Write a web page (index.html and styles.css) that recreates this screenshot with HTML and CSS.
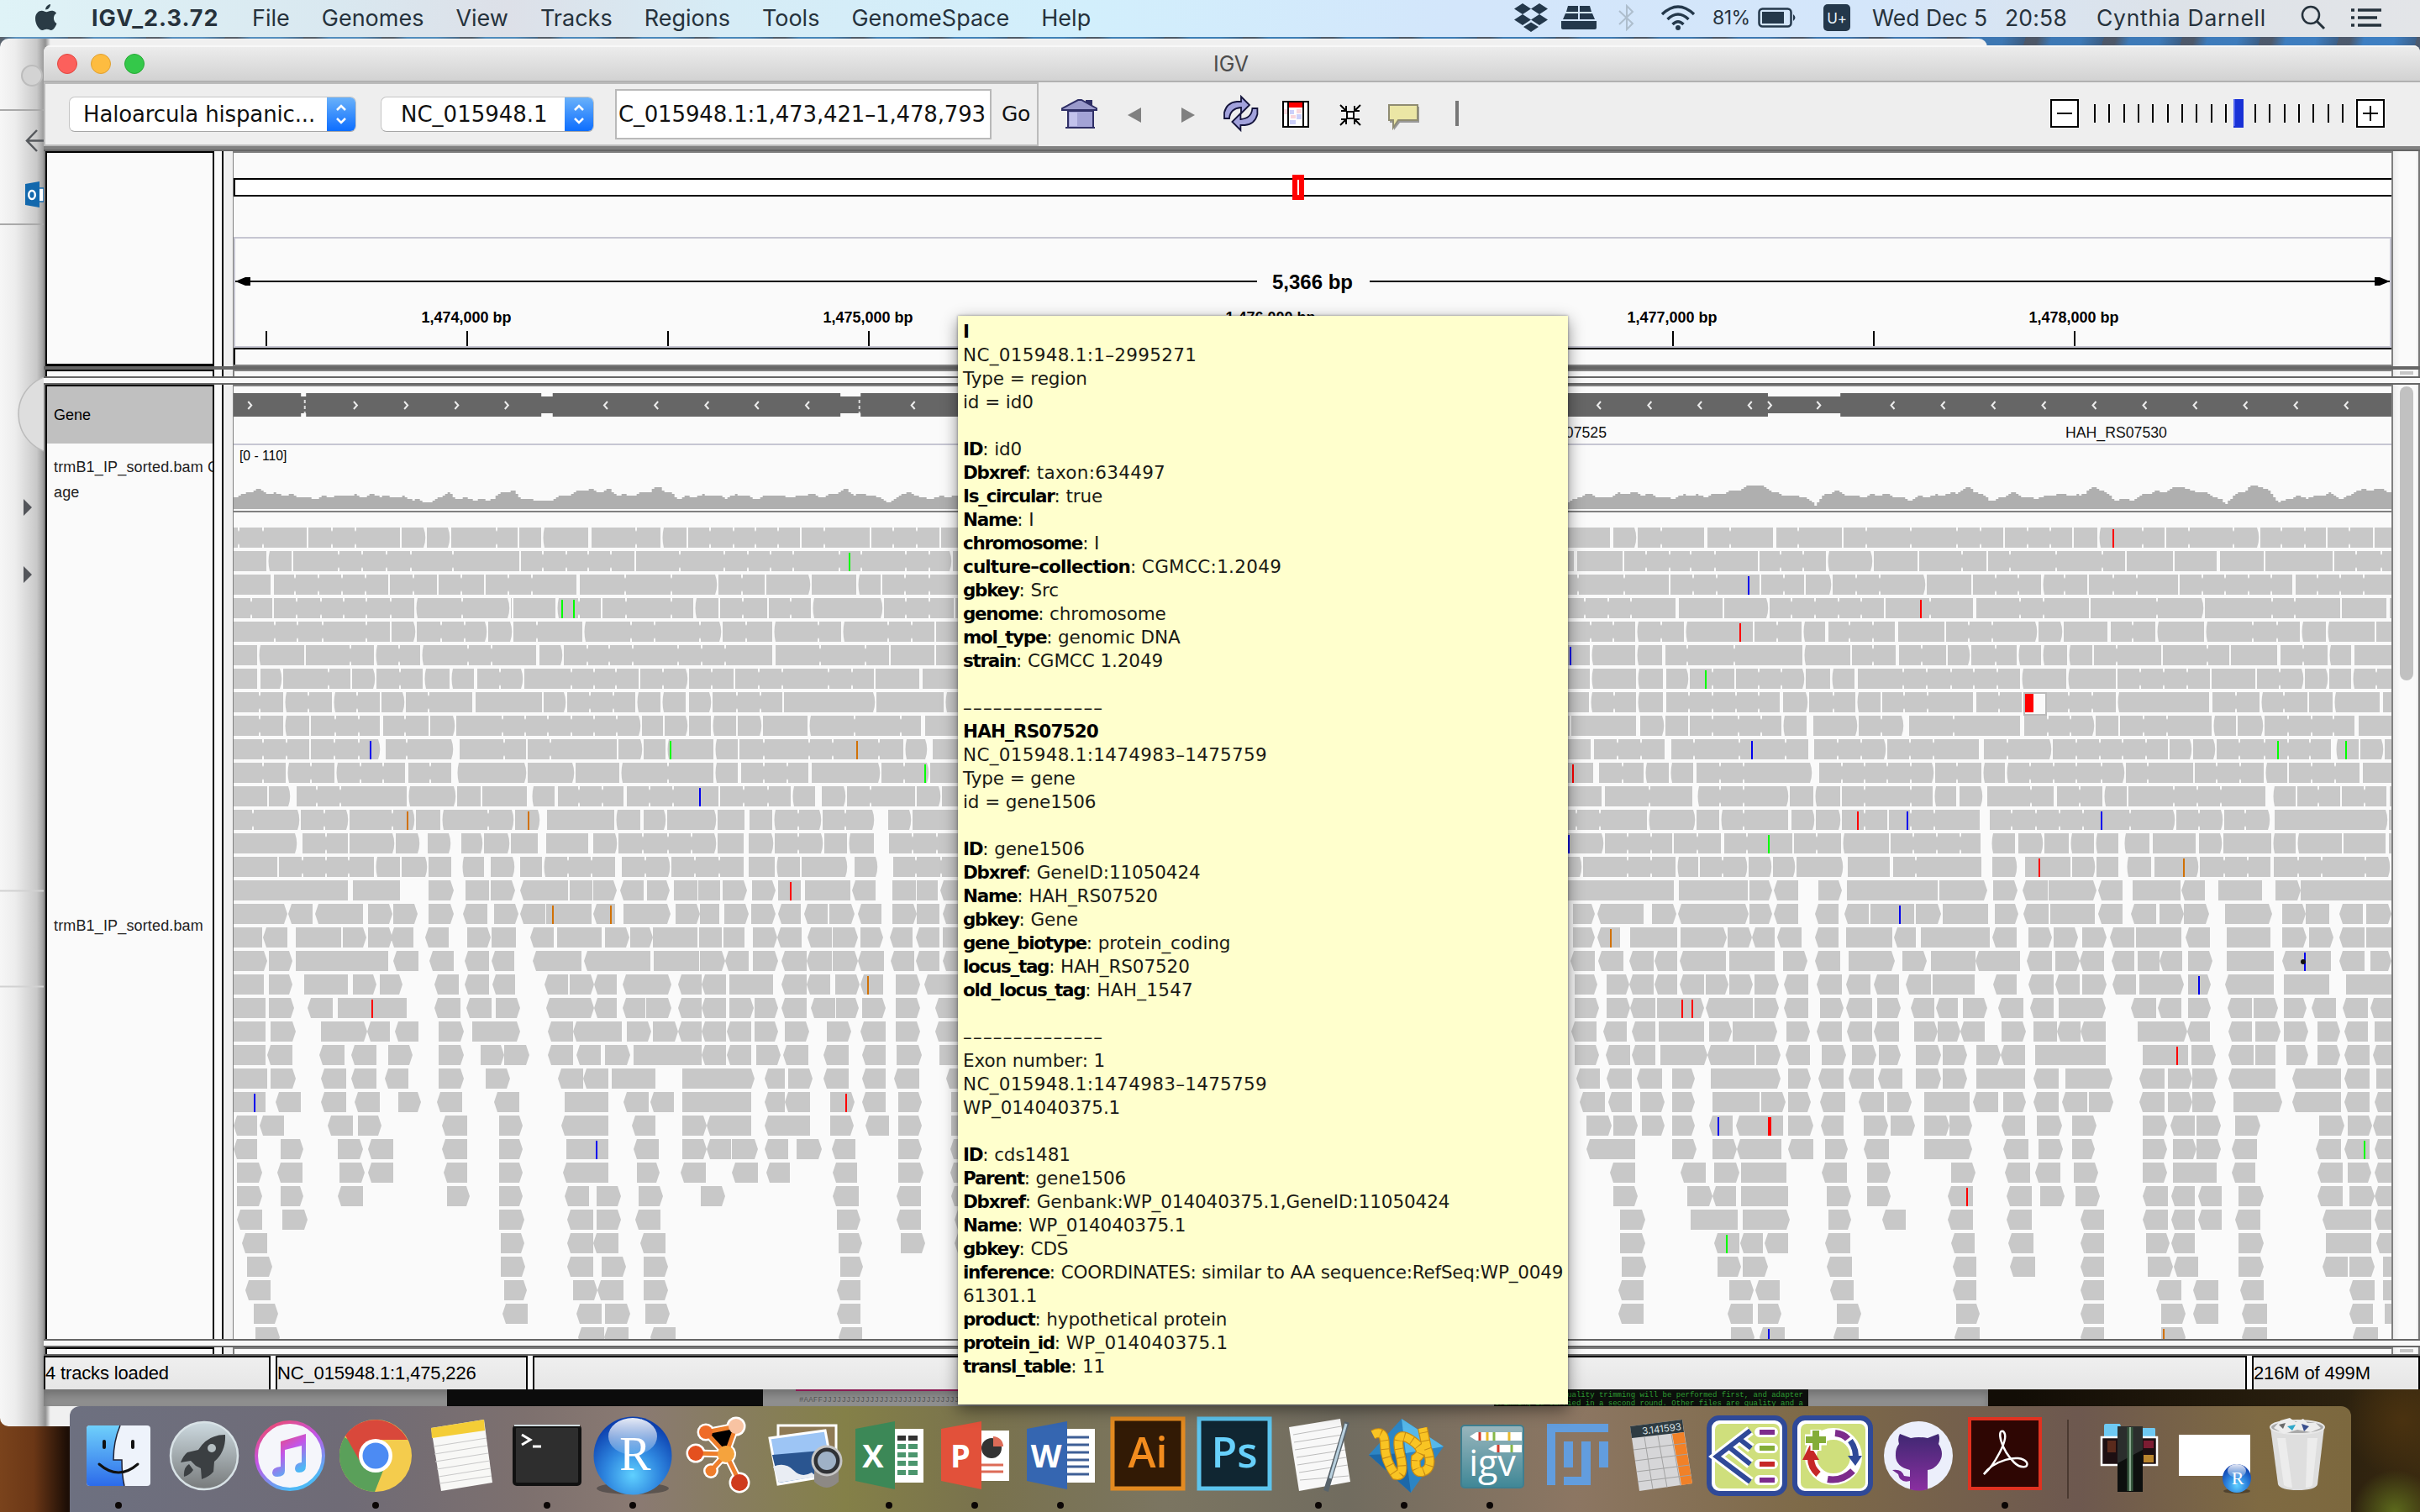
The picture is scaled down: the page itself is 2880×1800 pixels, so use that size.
FILE: index.html
```html
<!DOCTYPE html>
<html lang="en">
<head>
<meta charset="utf-8">
<title>IGV</title>
<link rel="stylesheet" href="styles.css">
</head>
<body>
<div class="desktop">

  <div class="back-window">
    <svg width="52" height="1652" viewBox="0 46 52 1652">
      <circle cx="38" cy="90" r="12" fill="#d3d3d3" stroke="#bcbcbc" stroke-width="2"/>
      <path d="M0 131H52M0 267H52" stroke="#a9a9a9" stroke-width="2"/>
      <path d="M0 1060.500H52M0 1174.500H52" stroke="#d2d2d2" stroke-width="2"/>
      <path d="M44 155L32 167.500L44 180M33 167.500H52" stroke="#55585c" stroke-width="2.500" fill="none"/>
      <path d="M30 219L47 216V247L30 244Z" fill="#1268ad"/>
      <path d="M47 224H52V240H47" fill="#fff" stroke="#1268ad" stroke-width="1.500"/>
      <ellipse cx="38" cy="232" rx="3.800" ry="5" fill="none" stroke="#fff" stroke-width="2.500"/>
      <circle cx="69" cy="493" r="47" fill="#dedede" stroke="#bbb" stroke-width="1.500"/>
      <path d="M28 594L38 604L28 614ZM28 674L38 684L28 694Z" fill="#53555a"/>
    </svg>
  </div>

  <div class="peek">
    <span class="p-gray"></span><span class="p-black"></span><span class="p-gray2"></span>
    <span class="p-pink">#AAFFJJJJJJJJJJJJJJJJJJJJJJJJJJJJJJJJ</span>
    <span class="p-term">uality trimming will be performed first, and adapter<br>trimming is carried in a second round. Other files are quality and a</span>
    <span class="p-gray3"></span>
  </div>

  <header class="menubar">
    <svg class="apple" width="28" height="32" viewBox="0 0 28 32"><path d="M19 0c.3 3-2.400 6.600-5.800 6.500C12.900 3.500 15.800.3 19 0zM26.500 23c-1.500 4-4 8-6.600 8-2 0-2.700-1.200-5.200-1.200S11.400 31 9.500 31C5.500 31 1 23.500 1 17.200 1 11 5 7.800 8.700 7.800c2.300 0 4 1.400 5.600 1.400 1.500 0 3.500-1.500 6.300-1.500 1 0 3.800.3 5.500 3-4.600 2.700-3.900 9.800.4 12.300z" fill="#2a3b45"/></svg>
    <nav class="menus">
      <b>IGV_2.3.72</b><span>File</span><span>Genomes</span><span>View</span><span>Tracks</span><span>Regions</span><span>Tools</span><span>GenomeSpace</span><span>Help</span>
    </nav>
    <div class="status-items">
      <svg width="40" height="34" viewBox="0 0 40 34"><path d="M10 0l10 6.500-10 6.500L0 6.500zM30 0l10 6.500L30 13 20 6.500zM10 13l10 6.500-10 6.500L0 19.500zM30 13l10 6.500L30 26l-10-6.500zM20 22.500l9 5.500-9 6-9-6z" fill="#24384b"/></svg>
      <svg class="s2" width="42" height="28" viewBox="0 0 42 28"><path d="M8 0h12v7H6zM22 0h12l2 7H22zM5 9h15v7H2zM22 9h15l3 7H22zM0 18h42v8q0 2-2 2H2q-2 0-2-2z" fill="#24384b"/></svg>
      <svg class="s3" width="20" height="32" viewBox="0 0 20 32"><path d="M1 8L17 23L10 30V2L17 9L1 24" fill="none" stroke="#aebecd" stroke-width="2"/></svg>
      <svg class="s4" width="42" height="30" viewBox="0 0 42 30"><g fill="none" stroke="#24384b" stroke-width="3.400"><path d="M2 11Q21-7 40 11"/><path d="M8.500 17Q21 5 33.500 17"/><path d="M14.500 23Q21 16.500 27.500 23"/></g><circle cx="21" cy="27" r="3" fill="#24384b"/></svg>
      <span class="pct">81%</span>
      <svg class="s5" width="48" height="24" viewBox="0 0 48 24"><rect x="1.500" y="1.500" width="38" height="21" rx="4" fill="none" stroke="#24384b" stroke-width="2.500"/><rect x="5" y="5" width="26" height="14" fill="#24384b"/><path d="M42 8q5 4 0 8z" fill="#24384b"/></svg>
      <span class="uplus">U+</span>
      <span class="date">Wed Dec 5</span><span class="time">20:58</span><span class="user">Cynthia Darnell</span>
      <svg class="s6" width="30" height="30" viewBox="0 0 30 30"><circle cx="12" cy="12" r="10" fill="none" stroke="#26323c" stroke-width="2.500"/><path d="M19 19L28 28" stroke="#26323c" stroke-width="3"/></svg>
      <svg class="s7" width="36" height="22" viewBox="0 0 36 22"><path d="M0 2H4M8 2H36M0 11H4M8 11H31M0 20H4M8 20H36" stroke="#26323c" stroke-width="3.500"/></svg>
    </div>
  </header>

  <main class="window">
    <div class="titlebar"><i class="dot red"></i><i class="dot amber"></i><i class="dot green"></i><span class="title">IGV</span></div>

    <div class="toolbar">
      <div class="locate">
        <div class="combo genome"><span>Haloarcula hispanic...</span><em><svg width="16" height="28" viewBox="0 0 16 28"><path d="M3 9L8 4L13 9M3 19L8 24L13 19" fill="none" stroke="#fff" stroke-width="2.500"/></svg></em></div>
        <div class="combo chrom"><span>NC_015948.1</span><em><svg width="16" height="28" viewBox="0 0 16 28"><path d="M3 9L8 4L13 9M3 19L8 24L13 19" fill="none" stroke="#fff" stroke-width="2.500"/></svg></em></div>
        <div class="locus"><span>NC_015948.1:1,473,421–1,478,793</span></div>
        <span class="go">Go</span>
      </div>
      <svg class="tools" width="1644" height="74" viewBox="1236 100 1644 74">
        <path d="M1292 126V119H1300V129Z" fill="#2f2f66"/>
        <path d="M1271 132V152H1301V132Z" fill="#a3a3d6" stroke="#2f2f66" stroke-width="2"/>
        <path d="M1264 131V129L1283 119H1287L1305 129V131Z" fill="#9a9acb" stroke="#2f2f66" stroke-width="2"/>
        <path d="M1268 152H1303" stroke="#2f2f66" stroke-width="2"/><path d="M1273 134H1282V150H1273Z" fill="#c2c2ec"/>
        <path d="M1358 128V146L1342 137Z" fill="#808080"/><path d="M1406 128V146L1422 137Z" fill="#808080"/>
        <g fill="#a2a2dc" stroke="#14143c" stroke-width="1.800"><path id="spin" d="M1457 141V134Q1460 122 1472 121H1477V115L1487 125L1477 135V128Q1464 129 1463 141Z"/><use href="#spin" transform="rotate(180 1476.700 135)"/></g>
        <rect x="1527" y="121" width="30" height="30" fill="#fff" stroke="#000" stroke-width="2"/><path d="M1534 122H1550V128H1534Z" fill="#f00"/><path d="M1533 122V150M1551 122V150" stroke="#000" stroke-width="2"/><path d="M1535 131h5v5h-5zM1543 136h6v6h-6zM1535 143h7v5h-7z" fill="#ccd0fa"/><path d="M1543 130h6v5h-6zM1536 137h6v4h-6zM1528 130h4v6h-4z" fill="#f9d6dc"/>
        <path d="M1595 125L1602 132M1602 126V132H1596M1619 125L1612 132M1612 126V132H1618M1595 149L1602 142M1596 142H1602V148M1619 149L1612 142M1618 142H1612V148" fill="none" stroke="#000" stroke-width="2"/><rect x="1603" y="133" width="8" height="8" fill="#fff" stroke="#000" stroke-width="2"/>
        <path d="M1654 127H1689V146H1666L1659 155V146H1654Z" fill="#999"/><path d="M1653 125H1687V143H1664L1658 152V143H1653Z" fill="#ebe6a5" stroke="#8f8c72" stroke-width="2"/>
        <path d="M1734 120V150" stroke="#777" stroke-width="4"/>
        <g fill="#fff" stroke="#000" stroke-width="2"><rect x="2441" y="119" width="32" height="32"/><rect x="2805" y="119" width="32" height="32"/></g>
        <path d="M2448 135H2466M2812 135H2830M2821 126V144" stroke="#000" stroke-width="2"/>
        <g id="zoom-ticks" stroke="#000" stroke-width="2"></g>
        <rect x="2658" y="118" width="12" height="34" fill="#1931d6"/><path d="M2659 118V150" stroke="#4f63f0" stroke-width="2"/>
      </svg>
    </div>
    <div class="rule-dark"></div>

    <section class="pane header">
      <div class="names"></div><div class="split"></div>
      <svg class="data" width="2569" height="256" viewBox="277 180 2569 256">
        <rect x="277" y="180" width="2569" height="256" fill="#fafafa"/>
        <path d="M277 181H2846M277 435H2846" stroke="#808080" stroke-width="2"/>
        <rect x="279" y="213" width="2567" height="20" fill="#fff"/>
        <path d="M278 213H2846M278 233H2846M279 212V234" stroke="#000" stroke-width="2"/>
        <path d="M1538 208H1552V238H1538Z" fill="#f00"/><path d="M1545 214V232" stroke="#fff" stroke-width="2"/>
        <path d="M278 283H2846M278 413H2846M279 283V413M2845 283V413" stroke="#c6c6d2" stroke-width="2"/>
        <path d="M277.500 180V436" stroke="#808080"/>
        <path d="M278 415H2846M279 415V434" stroke="#000" stroke-width="2"/>
        <path d="M280 335H1496M1630 335H2844" stroke="#000" stroke-width="2"/>
        <path d="M280 335L292 330H298V340H292Z"/><path d="M2844 335L2832 330H2826V340H2832Z"/>
        <text x="1562" y="344" class="span-label">5,366 bp</text>
        <g id="ruler"></g>
      </svg>
      <div class="edge"></div><div class="scroll"></div><div class="margin"></div>
    </section>
    <div class="rule-dark thin"></div>
    <section class="pane sliver">
      <div class="names"></div><div class="split"></div><div class="data sliver-data"></div><div class="edge"></div><div class="scroll"><i class="stub"></i></div><div class="margin"></div>
    </section>
    <div class="splitter"></div>

    <section class="pane tracks">
      <div class="names"><div class="gene-name">Gene</div><div class="cov-name">trmB1_IP_sorted.bam Cover<br>age</div><div class="bam-name">trmB1_IP_sorted.bam</div></div>
      <div class="split"></div>
      <svg class="data" width="2569" height="1136" viewBox="277 458 2569 1136">
        <rect x="277" y="458" width="2569" height="1136" fill="#fafafa"/>
        <path d="M277 459H2846M277 609H2846" stroke="#808080" stroke-width="2"/>
        <path d="M277 529H2846" stroke="#c6c6d2" stroke-width="2"/>
        <g id="gene"></g>
        <text x="285" y="548" class="range">[0 - 110]</text>
        <text x="1912" y="521" text-anchor="end" class="feature">HAH_RS07525</text>
        <text x="2458" y="521" class="feature">HAH_RS07530</text>
        <path id="coverage" fill="#afafaf"/>
        <g id="reads"></g>
        <path d="M277.500 458V1594" stroke="#808080"/>
      </svg>
      <div class="edge"></div><div class="scroll"><i class="thumb"></i></div><div class="margin"></div>
    </section>
    <div class="splitter low"></div>
    <section class="pane sliver last">
      <div class="names"></div><div class="split"></div><div class="data sliver-data"></div><div class="edge"></div><div class="scroll"><i class="stub"></i></div><div class="margin"></div>
    </section>
    <div class="rule-status"></div>
    <footer class="statusbar"><span>4 tracks loaded</span><span>NC_015948.1:1,475,226</span><span></span><span>216M of 499M</span></footer>
  </main>

  <div class="dock">
    <svg viewBox="0 0 102 126"><defs><linearGradient id="fb" x1="0" y1="0" x2="0" y2="1"><stop offset="0" stop-color="#6fd0fb"/><stop offset="1" stop-color="#2c6bea"/></linearGradient></defs><rect x="13" y="23" width="76" height="72" rx="4" fill="#eef3fb"/><path d="M53 23H17q-4 0-4 4V91q0 4 4 4H58Q55 82 55 64H45Q45 42 53 23Z" fill="url(#fb)"/><path d="M53 23Q45 42 45 64H55Q55 82 58 95" fill="none" stroke="#223" stroke-width="1.500"/><path d="M34 42V49M68 42V49" stroke="#111" stroke-width="4" stroke-linecap="round"/><path d="M28 69Q51 89 74 69" fill="none" stroke="#111" stroke-width="3" stroke-linecap="round"/><circle class="run" cx="51" cy="118" r="4"/></svg>
    <svg viewBox="0 0 102 126"><defs><linearGradient id="lp" x1="0" y1="0" x2="0" y2="1"><stop offset="0" stop-color="#cddae0"/><stop offset="1" stop-color="#777a7b"/></linearGradient></defs><circle cx="51" cy="59" r="40" fill="url(#lp)" stroke="#d8e2e6" stroke-width="2.500"/><path d="M76 34Q55 34 44 52L31 55Q26 59 23 67L35 65L41 71L47 74L48 87Q57 84 62 78L63 66Q77 54 76 34ZM33 69Q26 73 27 84Q34 82 38 76Z" fill="#3b3f42"/><circle cx="60" cy="50" r="5" fill="#b5bfc2"/></svg>
    <svg viewBox="0 0 102 126"><defs><linearGradient id="it" x1="0" y1="0" x2=".5" y2="1"><stop offset="0" stop-color="#f4495c"/><stop offset=".5" stop-color="#c355e8"/><stop offset="1" stop-color="#4db8f5"/></linearGradient></defs><circle cx="51" cy="59" r="40" fill="#f5f6fb" stroke="url(#it)" stroke-width="4"/><path d="M40 42L70 33V71Q70 79 62 79Q57 79 57 74Q57 68 65 67V47L45 52V77Q45 84 36 84Q30 84 30 79Q30 73 40 72Z" fill="url(#it)"/></svg>
    <svg viewBox="0 0 102 126"><circle cx="51" cy="59" r="43" fill="#f4cc4d"/><path d="M14 37A43 43 0 0 0 50 102L63 69L51 59Z" fill="#5aa05a"/><path d="M15 35A43 43 0 0 1 89 40H51L33 67Z" fill="#d9483b"/><circle cx="51" cy="59" r="20" fill="#fff"/><circle cx="51" cy="59" r="15.500" fill="#4c8bf3"/><circle class="run" cx="51" cy="118" r="4"/></svg>
    <svg viewBox="0 0 102 126"><path d="M15 26L78 16L88 91L27 101Z" fill="#f8f8f6"/><path d="M15 26L78 16L79 29L16 38Z" fill="#f4cd36"/><path d="M18 48L81 38M19 57L82 47M20 66L83 56M22 75L85 65M24 84L86 74M25 92L87 83" stroke="#c9c9c9" stroke-width="1.200"/></svg>
    <svg viewBox="0 0 102 126"><rect x="12" y="24" width="78" height="69" rx="3" fill="#2e2e2e" stroke="#111" stroke-width="4"/><path d="M12 23H90" stroke="#cfdadd" stroke-width="2"/><path d="M21 34L31 40L21 46M34 48H44" fill="none" stroke="#fff" stroke-width="3"/><circle class="run" cx="51" cy="118" r="4"/></svg>
    <svg viewBox="0 0 102 126"><defs><radialGradient id="rr" cx=".5" cy=".75" r=".7"><stop offset="0" stop-color="#5fd0ff"/><stop offset=".5" stop-color="#2e86df"/><stop offset="1" stop-color="#0c3fae"/></radialGradient><linearGradient id="rg" x1="0" y1="0" x2="0" y2="1"><stop offset="0" stop-color="#fff" stop-opacity=".9"/><stop offset="1" stop-color="#fff" stop-opacity=".15"/></linearGradient></defs><ellipse cx="51" cy="98" rx="43" ry="7" fill="#3e3b3b" opacity=".6"/><circle cx="51" cy="59" r="46.500" fill="url(#rr)"/><ellipse cx="51" cy="36" rx="29" ry="22" fill="url(#rg)"/><text x="54" y="76" class="serif-r">R</text><circle class="run" cx="51" cy="118" r="4"/></svg>
    <svg viewBox="0 0 102 126"><g stroke="#fff" stroke-width="9" stroke-linecap="round"><path d="M72 24L60 57L36 31M60 57L24 56M60 57L42 77M60 57L76 90M72 24L36 31"/></g><g fill="#fff"><circle cx="72" cy="24" r="11.500"/><circle cx="36" cy="31" r="10.500"/><circle cx="24" cy="56" r="11.500"/><circle cx="60" cy="57" r="12"/><circle cx="42" cy="77" r="9"/><circle cx="76" cy="91" r="12.500"/></g><g stroke="#ee7f2c" stroke-width="5" stroke-linecap="round"><path d="M72 24L60 57L36 31M60 57L24 56M60 57L42 77M60 57L76 90M72 24L36 31"/></g><circle cx="72" cy="24" r="9" fill="#f8c3a2"/><circle cx="36" cy="31" r="8" fill="#ef6b28"/><circle cx="24" cy="56" r="9" fill="#e4501f"/><circle cx="60" cy="57" r="10" fill="#f5a33d"/><circle cx="42" cy="77" r="6.500" fill="#ef7d2c"/><circle cx="76" cy="91" r="10" fill="#cf3a1c"/></svg>
    <svg viewBox="0 0 102 126"><path d="M20 23H89V84H20Z" fill="#8f7a55" stroke="#fff" stroke-width="3"/><path d="M10 38L76 29L86 82L20 93Z" fill="#9dc5f5" stroke="#fff" stroke-width="3"/><path d="M13 58L82 52L85 80L21 91Z" fill="#2a5590"/><path d="M14 72Q28 66 38 76T60 79L66 84L21 91Z" fill="#e9edf3"/><path d="M63 65V90Q78 104 92 90V65Z" fill="#8d8985"/><circle cx="78" cy="65" r="17" fill="#303236" stroke="#c5c5c5" stroke-width="3"/><circle cx="78" cy="65" r="11" fill="#9fb1c6"/></svg>
    <svg viewBox="0 0 102 126"><path d="M55 27H91V91H50Z" fill="#fff"/><path d="M60 35H70V41H60ZM73 35H84V41H73Z" fill="#333"/><path d="M60 45H70V51H60ZM73 45H84V51H73ZM60 55H70V61H60ZM73 55H84V61H73ZM60 65H70V71H60ZM73 65H84V71H73ZM60 76H70V82H60ZM73 76H84V82H73Z" fill="#4c966e"/><path d="M10 27L57 18V99L10 89Z" fill="#3c8857"/><text x="31" y="73" class="office">X</text><circle class="run" cx="50" cy="118" r="4"/></svg>
    <svg viewBox="0 0 102 126"><path d="M55 29H91V89H50Z" fill="#fff"/><circle cx="70" cy="50" r="12" fill="#333"/><path d="M72 48V36A12 12 0 0 1 84 48Z" fill="#dd6b57"/><path d="M57 70H84M57 78H84" stroke="#dd6b57" stroke-width="3"/><path d="M10 27L58 18V99L10 89Z" fill="#e2513a"/><text x="33" y="73" class="office">P</text><circle class="run" cx="50" cy="118" r="4"/></svg>
    <svg viewBox="0 0 102 126"><path d="M55 27H91V91H50Z" fill="#fff"/><path d="M57 37H84M57 46H84M57 55H84M57 64H84M57 72H84M57 81H84" stroke="#3e5f96" stroke-width="3"/><path d="M10 27L58 18V99L10 89Z" fill="#3566b1"/><text x="33" y="73" class="office">W</text><circle class="run" cx="50" cy="118" r="4"/></svg>
    <svg viewBox="0 0 102 126"><rect x="10" y="15" width="84" height="83" fill="#321a05" stroke="#e38a20" stroke-width="5"/><text x="52" y="73" class="adobe" fill="#f28c1e">Ai</text></svg>
    <svg viewBox="0 0 102 126"><rect x="11" y="15" width="84" height="83" fill="#102632" stroke="#5cc4ee" stroke-width="5"/><text x="53" y="73" class="adobe" fill="#67d0fb">Ps</text></svg>
    <svg viewBox="0 0 102 126"><path d="M16 25L77 15L89 90L28 101Z" fill="#f8f8f8"/><path d="M21 34L78 24M22 43L80 34M23 52L81 43M25 61L83 52M26 70L84 61M28 79L86 70M29 88L87 83" stroke="#bcbcbc"/><path d="M85 19L64 88L60 101" stroke="#59646c" stroke-width="6" fill="none"/><path d="M84 21L65 86" stroke="#b9d1df" stroke-width="3"/><circle class="run" cx="51" cy="118" r="4"/></svg>
    <svg viewBox="0 0 102 126"><g transform="translate(3 0)"><path d="M45 15L95 48L56 103L6 58Z" fill="#2c85c4"/><path d="M45 15L95 48L50 56Z" fill="#56b8ea"/><path d="M6 58L50 56L56 103Z" fill="#1c68a8"/><path d="M11 34Q25 27 25 46T38 82Q50 85 43 56T56 40T62 62Q60 80 70 78Q84 74 75 50L70 26" fill="none" stroke="#c88b13" stroke-width="12"/><path d="M11 34Q25 27 25 46T38 82Q50 85 43 56T56 40T62 62Q60 80 70 78Q84 74 75 50L70 26" fill="none" stroke="#f9c423" stroke-width="9.500" stroke-dasharray="9 1"/></g><circle class="run" cx="51" cy="118" r="4"/></svg>
    <svg viewBox="0 0 102 126"><defs><linearGradient id="ig" x1="0" y1="0" x2="0" y2="1"><stop offset="0" stop-color="#9ab6bd"/><stop offset="1" stop-color="#3f8796"/></linearGradient></defs><g transform="translate(3 0)"><rect x="14" y="23" width="74" height="74" rx="4" fill="url(#ig)" stroke="#3f7f90" stroke-width="2"/><path d="M24 36L32 31H86V41H32ZM46 51L54 46H86V55H54Z" fill="#fff"/><path d="M36 31V41M58 46V55" stroke="#d43a2a" stroke-width="3"/><path d="M45 31V41M71 31V41" stroke="#e8b92c" stroke-width="3"/><path d="M53 31V41M74 46V55" stroke="#85b748" stroke-width="3"/><text x="51" y="83" class="igv">igv</text></g><circle class="run" cx="51" cy="118" r="4"/></svg>
    <svg viewBox="0 0 102 126"><path d="M17 94V21H90V31H27V94ZM37 42H48V73H37ZM58 42H69V94H37V84H58ZM79 42H90V73H79Z" fill="#629dde"/></svg>
    <svg viewBox="0 0 102 126"><g transform="translate(2 0)"><path d="M12 24L74 16L86 92L23 101Z" fill="#d6d6d8"/><path d="M12 24L74 16L76 31L14 38Z" fill="#2e3b42"/><path d="M62 33L76 31L86 92L73 94Z" fill="#f18128"/><path d="M16 52L79 44M18 65L81 57M20 78L83 70M21 90L85 82M29 37L39 99M45 35L56 97M61 33L72 95" stroke="#a2a2a2"/><text x="50" y="31" transform="rotate(-7 50 31)" class="calc">3.141593</text></g></svg>
    <svg viewBox="0 0 102 126"><rect x="6" y="14" width="90" height="90" rx="12" fill="#fff" stroke="#2f4998" stroke-width="6"/><rect x="13" y="21" width="77" height="77" rx="7" fill="#cfdf7c"/><path d="M55 29L15 60L55 90M42 39L56 50M30 49L55 69" fill="none" stroke="#fff" stroke-width="12"/><path d="M55 29L15 60L55 90M42 39L56 50M30 49L55 69" fill="none" stroke="#2f4998" stroke-width="6"/><g stroke="#fff" stroke-width="12" stroke-linecap="round"><path d="M66 31H82M66 50H82M66 69H82M66 88H82"/></g><path d="M66 31H84M66 88H84" stroke="#7d2c8c" stroke-width="6"/><path d="M66 50H84" stroke="#84ad38" stroke-width="6"/><path d="M66 69H84" stroke="#c62828" stroke-width="6"/></svg>
    <svg viewBox="0 0 102 126"><rect x="6" y="14" width="90" height="90" rx="12" fill="#fff" stroke="#2f4998" stroke-width="6"/><rect x="13" y="21" width="77" height="77" rx="7" fill="#cfdf7c"/><circle cx="52" cy="60" r="27" fill="none" stroke="#fff" stroke-width="14"/><path d="M54 32Q64 33 69 39" stroke="#7d2c8c" stroke-width="8" fill="none"/><path d="M72 41Q80 52 78 64" stroke="#2f4998" stroke-width="7" fill="none"/><path d="M69 59H86L78 71Z" fill="#2f4998"/><path d="M75 77Q62 90 45 87" stroke="#7d2c8c" stroke-width="8" fill="none"/><path d="M34 81Q25 73 25 62" stroke="#c62828" stroke-width="8" fill="none"/><path d="M15 64L24 46L35 64Z" fill="#c62828"/><path d="M31 28V53M18 40H44" stroke="#fff" stroke-width="13"/><path d="M31 29V52M19 40H43" stroke="#84ad38" stroke-width="8"/></svg>
    <svg viewBox="0 0 102 126"><defs><linearGradient id="gh" x1="0" y1="0" x2="0" y2="1"><stop offset="0" stop-color="#3f2872"/><stop offset="1" stop-color="#8a2fa0"/></linearGradient></defs><circle cx="51" cy="59" r="41" fill="#eceffb"/><path d="M29 33L42 38Q51 36 62 38L75 33Q77 38 75 45Q83 57 75 68Q70 75 62 76V99Q51 102 41 99V89Q29 92 27 81L20 76Q31 74 34 83L41 84V76Q23 72 24 57Q24 50 28 45Q26 38 29 33Z" fill="url(#gh)"/></svg>
    <svg viewBox="0 0 102 126"><rect x="10" y="15" width="84" height="83" fill="#2e0603" stroke="#e03221" stroke-width="4"/><path d="M27 81C37 73 59 38 50 30C42 27 47 51 63 67C71 75 81 73 78 67C69 55 37 66 27 81Z" fill="none" stroke="#fff" stroke-width="2.500"/><circle class="run" cx="52" cy="118" r="4"/></svg>
    <svg class="divider" viewBox="0 0 50 126"><path d="M25 16V110" stroke="#4b3a31" stroke-width="2"/></svg>
    <svg viewBox="0 0 102 126"><path d="M18 23q0-2 2-2H36q2 0 2 5H78q1 0 1 2V40H18Z" fill="#6ec9f3"/><path d="M15 37H81V70H15Z" fill="#1d0f12" stroke="#fff" stroke-width="2.500"/><path d="M22 41H32V55H22Z" fill="#5a2a1c"/><path d="M65 41H77V50H65Z" fill="#7c1c32"/><path d="M65 58H77V67H65Z" fill="#b9852e"/><path d="M34 24H64V102H34Z" fill="#0d0f0e"/><path d="M34 24H64V52L34 68Z" fill="#2b2e2d"/><path d="M49 25V101" stroke="#35553c" stroke-width="7"/><path d="M49 25V101" stroke="#a9c5ad" stroke-width="1.500"/></svg>
    <svg viewBox="0 0 102 126"><path d="M5 34H90V83H5Z" fill="#fff"/><ellipse cx="74" cy="101" rx="16" ry="3" fill="#332b22" opacity=".6"/><circle cx="74" cy="86" r="17" fill="url(#rr)"/><ellipse cx="74" cy="77" rx="11" ry="8" fill="url(#rg)"/><text x="75" y="93" class="serif-r small">R</text></svg>
    <svg viewBox="0 0 102 126"><path d="M12 25H76L68 93Q66 100 44 100Q24 100 21 93Z" fill="#dedede"/><path d="M20 38L28 94Q32 97 38 97L30 38ZM56 38L54 97Q60 97 62 94L68 38Z" fill="#ececec"/><ellipse cx="44" cy="25" rx="32" ry="8" fill="#a9a9a9" stroke="#e8e8e8" stroke-width="2"/><path d="M16 26L24 17L35 14L42 19L51 15L56 20L66 20L72 26L60 31L44 28L28 33Z" fill="#ededed"/><path d="M32 24L42 22L38 29Z" fill="#2fa7c9"/><path d="M49 21L58 24L52 30Z" fill="#3a4f8d"/><path d="M22 22L30 20L27 27Z" fill="#6a6a6a"/></svg>
  </div>

  <div class="tooltip"><b>I</b>
<span class="coord">NC_015948.1:1–2995271</span>
Type = region
id = id0

<b>ID</b>: id0
<b>Dbxref</b>: <span class="coord">taxon:634497</span>
<b>Is_circular</b>: true
<b>Name</b>: I
<b>chromosome</b>: I
<b class="loose">culture–collection</b>: <span class="coord">CGMCC:1.2049</span>
<b>gbkey</b>: Src
<b>genome</b>: chromosome
<b>mol_type</b>: genomic DNA
<b>strain</b>: CGMCC 1.2049

<span class="dashes">––––––––––––––</span>
<b class="loose">HAH_RS07520</b>
<span class="coord">NC_015948.1:1474983–1475759</span>
Type = gene
id = gene1506

<b>ID</b>: gene1506
<b>Dbxref</b>: GeneID:11050424
<b>Name</b>: HAH_RS07520
<b>gbkey</b>: Gene
<b>gene_biotype</b>: protein_coding
<b>locus_tag</b>: HAH_RS07520
<b>old_locus_tag</b>: <span class="coord">HAH_1547</span>

<span class="dashes">––––––––––––––</span>
Exon number: 1
<span class="coord">NC_015948.1:1474983–1475759</span>
WP_014040375.1

<b>ID</b>: cds1481
<b>Parent</b>: gene1506
<b>Dbxref</b>: Genbank:WP_014040375.1,GeneID:11050424
<b>Name</b>: WP_014040375.1
<b>gbkey</b>: CDS
<b>inference</b>: <span class="tight">COORDINATES: similar to AA sequence:RefSeq:WP_0049</span>
61301.1
<b>product</b>: hypothetical protein
<b>protein_id</b>: <span class="coord">WP_014040375.1</span>
<b>transl_table</b>: 11</div>
</div>
<script src="tracks.js"></script>
</body>
</html>
```
FILE: styles.css
```css
* { box-sizing: border-box; }
body { margin: 0; width: 2880px; height: 1800px; overflow: hidden; font-family: "Liberation Sans", Arial, sans-serif; }
svg { display: block; flex: none; }
.desktop { position: relative; width: 2880px; height: 1800px; overflow: hidden;
  background:
    radial-gradient(circle at 2850px 1800px, #5c6a1c, transparent 50px),
    radial-gradient(circle at 2860px 1690px, #4a3210, transparent 70px),
    repeating-linear-gradient(105deg, rgba(90,60,40,.55) 0 14px, transparent 30px 64px, rgba(60,50,50,.4) 90px) 0 0 / 2880px 130px no-repeat,
    linear-gradient(90deg, #7a431c 0, #6b3716 40px, #1d0e06 80px, #120a05 400px, #120d06 2400px, #2c210f 2790px, #3a2a10) 0 1600px / 2880px 200px no-repeat,
    linear-gradient(90deg, #5b93c0, #3c7fb5 50%, #3d76b0 80%, #3e80c4); }

.menubar { position: absolute; inset: 0 0 auto 0; height: 44px; display: flex; align-items: center; justify-content: space-between; padding: 0 46px 2px 41px;
  background: linear-gradient(90deg, #dff3f7, #d9e8f0 14%, #dde0e8 21%, #d6ecf6 30%, #d2effc 45%, #d3e6fb 60%, #d4e6fa 78%, #dde2e8 90%, #e3e5e8);
  color: #26323c; font: 26.500px Inter, sans-serif; letter-spacing: -.3px; }
.menus { display: flex; gap: 38px; margin: 0 auto 0 40px; font-size: 27px; letter-spacing: 0; }
.menus * { white-space: nowrap; }
.menus b { width: 153px; letter-spacing: 1px; }
.status-items { display: flex; align-items: center; white-space: nowrap; }
.s2 { margin-left: 16px; } .s3 { margin-left: 26px; } .s4 { margin-left: 30px; }
.pct { width: 54px; margin-left: 20px; font-size: 23px; letter-spacing: -.5px; }
.uplus { width: 32px; height: 32px; margin: 0 26px 0 30px; border-radius: 5px; background: #24384b; color: #e8f2fa; font-size: 17px; line-height: 34px; text-align: center; }
.date { width: 158px; letter-spacing: 0; } .time { width: 109px; letter-spacing: .2px; } .user { width: 243px; letter-spacing: .7px; }
.s7 { margin-left: 30px; }

.back-window { position: absolute; left: 0; top: 46px; width: 2365px; height: 1652px; border-radius: 10px; background: linear-gradient(90deg, #f6f6f6, #ededed 18px, #c8c8c8 44px, #909090 54px, #f0f0f0 60px); }
.peek { position: absolute; left: 52px; top: 1654px; width: 2314px; height: 20px; display: grid; grid-template-columns: 480px 376px 39px 831px 374px 214px; overflow: hidden; background: #8e8e8e; font: 9px/11px "Liberation Mono", monospace; box-shadow: inset 0 6px 8px rgba(0,0,0,.2); }
.peek span { height: 20px; overflow: hidden; white-space: nowrap; }
.p-black { background: #0c0c0c; }
.p-pink { border-top: 2px solid #8a1a52; color: #555; line-height: 22px; padding-left: 4px; letter-spacing: .2px; }
.p-term { background: #0c0f0c; color: #2c9a31; text-align: right; padding: 2px 6px 0 0; line-height: 10px; }

.window { position: absolute; left: 52px; top: 54px; width: 2828px; height: 1600px; display: flex; flex-direction: column; background: #eee; border-radius: 8px 8px 0 0; overflow: hidden; }
.titlebar { height: 44px; display: flex; align-items: center; gap: 16px; padding-left: 16px; background: linear-gradient(#ececec, #d2d2d2); border-top: 2px solid #f8f8f8; border-bottom: 2px solid #b1b1b1; }
.dot { width: 24px; height: 24px; border-radius: 50%; border: 1.500px solid #e2463f; background: #fc605c; }
.amber { background: #fdbc40; border-color: #dfa032; } .green { background: #34c84a; border-color: #27aa35; }
.title { margin-left: 1256px; font: 25px Inter, sans-serif; color: #4c4c4c; }
.toolbar { height: 76px; display: flex; }
.locate { width: 1184px; display: flex; align-items: center; height: 76px; padding: 0 0 1px 28px; border: solid #bbb; border-width: 2px; font: 26px "DejaVu Sans", sans-serif; white-space: nowrap; color: #111; }
.tools { margin-top: 2px; }
.combo { height: 42px; display: flex; flex: none; justify-content: space-between; align-items: center; background: #fff; border: 1.500px solid #c4c4c4; border-bottom-color: #a5a5a5; border-radius: 7px; overflow: hidden; }
.combo em { flex: none; width: 34px; height: 42px; display: grid; place-items: center; background: linear-gradient(#6cb3fa, #0a6cff); }
.genome { width: 342px; padding-left: 16px; letter-spacing: -.15px; }
.chrom { width: 254px; margin-left: 29px; padding-left: 23px; }
.locus { flex: none; width: 448px; height: 60px; margin: 0 12px 0 25px; background: #fff; border: 2px solid #b9b9b9; display: flex; align-items: center; justify-content: flex-end; overflow: hidden; padding-right: 5px; letter-spacing: -.15px; }
.go { font-size: 25px; letter-spacing: -.35px; }
.rule-dark { height: 6px; flex: none; background: linear-gradient(#808080 66%, #666 66%); }
.rule-dark.thin { height: 4px; background: #666; }
.pane { display: grid; grid-template-columns: 201px 22px 2569px 2px 28px 4px; padding-left: 2px; background: #808080; flex: none; }
.header { height: 256px; } .sliver { height: 8px; } .tracks { height: 1136px; }
.names { background: #fafafa; border: 2px solid #000; overflow: hidden; }
.header .names { border-bottom-width: 3px; }
.sliver .names, .tracks .names { border-bottom: 0; }
.split { background: linear-gradient(90deg, #fafafa 9px, #000 9px 11px, #f0f0f0 11px); }
.sliver-data { background: #fafafa; border-top: 2px solid #808080; border-left: 2px solid #808080; }
.edge { background: #808080; }
.scroll { background: linear-gradient(90deg, #ededed, #fafafa 8px); padding: 2px 4px 0 8px; }
.margin { background: linear-gradient(90deg, #f0f0f0 2px, #777 2px); }
.stub { display: block; height: 4px; background: #c6c6c6; }
.thumb { display: block; width: 16px; height: 350px; border-radius: 8px; background: #c1c1c1; }
.splitter { height: 10px; flex: none; background: #f8f8f8; border: solid #666; border-width: 2px 0; }
.rule-status { height: 2px; flex: none; background: #666; }
.gene-name { height: 68px; background: #c0c0c0; padding: 20px 0 0 8px; font-size: 18px; line-height: 28px; }
.cov-name, .bam-name { padding-left: 8px; font-size: 18px; letter-spacing: .15px; white-space: nowrap; color: #222; }
.cov-name { height: 544px; padding-top: 13px; line-height: 30px; }
.bam-name { line-height: 60px; }
.span-label { font-size: 24px; font-weight: bold; text-anchor: middle; }
.tick-label { font-size: 18px; font-weight: bold; text-anchor: middle; }
.range { font-size: 15.700px; } .feature { font-size: 17.700px; fill: #111; }
.statusbar { height: 40px; display: grid; grid-template-columns: 270px 300px 2040px 200px; column-gap: 6px; font-size: 22px; letter-spacing: -.15px; line-height: 38px; background: #fafafa; }
.statusbar span { border: 2px solid #000; background: linear-gradient(#efefef, #e6e6e6); white-space: nowrap; }

.tooltip { position: absolute; left: 1140px; top: 376px; width: 726px; height: 1296px; padding: 5px 0 0 6px; background: #ffffcd; white-space: pre; overflow: hidden; font: 21.500px/28px "DejaVu Sans", sans-serif; letter-spacing: -.1px; color: #1a1a14; box-shadow: 0 6px 18px rgba(0,0,0,.45), 0 0 3px rgba(0,0,0,.4); }
.tooltip b { letter-spacing: -1.300px; color: #000; }
.tooltip .loose { letter-spacing: -.850px; }
.coord { letter-spacing: .3px; }
.tight { letter-spacing: -.2px; }
.dashes { letter-spacing: 1.200px; }

.dock { position: absolute; left: 83px; top: 1674px; width: 2715px; height: 126px; padding-left: 7px; display: flex; border-radius: 12px 12px 0 0;
  background: linear-gradient(90deg, #6d7080, #6f6b76 12%, #7d706e 20%, #8a7a72 25%, #848048 34%, #79724d 40%, #7b7561 48%, #716c5f 56%, #8c7662 66%, #7e6a48 76%, #6d584f 88%, #7f6a42 96%, #7c683e); }
.dock svg { width: 102px; height: 126px; }
.dock .divider { width: 50px; }
.run { fill: #0b0605; }
.dock text { text-anchor: middle; }
.serif-r { font: 56px "Liberation Serif", serif; fill: #fff; }
.serif-r.small { font-size: 22px; }
.office { font: bold 38px "Open Sans", sans-serif; fill: #fff; }
.adobe { font: 600 50px "Open Sans", sans-serif; }
.igv { font: 43px "Open Sans", sans-serif; fill: #fff; }
.calc { font: 11.500px Inter, sans-serif; fill: #dfe6e8; }
```
FILE: tracks.js
```js
const NS = 'http://www.w3.org/2000/svg';
const add = (parent, tag, attrs, text) => {
  const el = document.createElementNS(NS, tag);
  for (const k in attrs) el.setAttribute(k, attrs[k]);
  if (text) el.textContent = text;
  document.getElementById(parent).appendChild(el);
};

const west = { x: b => b / 1.3288, from: 369, to: 1530 };
const east = { x: b => 1840 + b / 1.5077, from: 20, to: 1517 };

/* Zoom slider */
for (let i = 0; i < 18; i++) if (i !== 10) {
  const x = Math.round(2493 + i * 17.35);
  add('zoom-ticks', 'path', { d: `M${x} 124V146` });
}

/* Ruler */
for (let i = 0; i < 10; i++) {
  const x = Math.round(316.500 + i * 239.200);
  add('ruler', 'path', { d: `M${x} 394V412`, stroke: '#000', 'stroke-width': 2 });
  if (i % 2) add('ruler', 'text', { x: x - 1, y: 384, class: 'tick-label' }, `1,47${4 + (i - 1) / 2},000 bp`);
}

/* Gene track: full-height exons with thinner overlaps between them */
add('gene', 'rect', { x: 278, y: 468, width: 2568, height: 28, fill: '#666' });
[[west, 476, 484], [west, 856, 874], [west, 1329, 1361], [east, 398, 528]].forEach(([t, a, b]) => {
  const x = t.x(a), width = t.x(b) - x;
  add('gene', 'rect', { x, y: 467, width, height: 5, fill: '#fafafa' });
  add('gene', 'rect', { x, y: 492, width, height: 5, fill: '#fafafa' });
});
const chevron = (x, d) => add('gene', 'path', { d: `M${x - 2 * d} 478L${x + 2 * d} 482.500L${x - 2 * d} 487`, fill: 'none', stroke: '#ececec', 'stroke-width': 2 });
[395, 562, 642, 722, 801].forEach(b => chevron(west.x(b), 1));
[958, 1038, 1118, 1197, 1277, 1444].forEach(b => chevron(west.x(b), -1));
[95, 186, 276, 366].forEach(b => chevron(east.x(b), -1));
[401, 489].forEach(b => chevron(east.x(b), 1));
for (let i = 0; i < 10; i++) chevron(east.x(622 + i * 90.450), -1);
[482, 1359].forEach(b => add('gene', 'path', { d: `M${west.x(b)} 476V492`, stroke: '#ddd', 'stroke-width': 2, 'stroke-dasharray': '4 3' }));

/* Coverage depth: bin,level pairs */
const depth = [
  [west, '369,381 385,375 402,360 425,373 460,378 495,388 520,382 550,378 575,382 590,375 605,382 640,385 660,395 680,400 695,382 710,371 718,388 740,388 760,393 780,388 792,367 810,367 825,388 860,396 880,385 905,375 922,360 945,367 962,362 975,378 1000,378 1025,367 1042,354 1055,370 1070,386 1120,378 1145,385 1172,375 1190,388 1220,377 1250,384 1280,374 1300,385 1318,375 1333,360 1350,375 1370,375 1390,388 1408,400 1425,373 1445,375 1465,390 1485,382 1530,378'],
  [east, '20,402 39,402 58,382 78,375 95,388 125,375 150,371 185,378 220,388 250,377 285,382 310,374 345,362 366,346 388,352 410,372 435,380 455,380 482,405 500,375 520,362 530,375 560,383 605,374 650,392 670,382 710,378 735,370 757,355 780,378 800,395 835,370 870,388 920,375 955,380 978,356 998,362 1015,390 1050,392 1075,372 1110,365 1137,350 1150,362 1175,370 1195,380 1217,402 1240,372 1272,347 1290,360 1315,400 1340,383 1375,385 1400,372 1430,390 1450,366 1475,362 1500,360 1517,372']
];
let cov = '';
depth.forEach(([t, s]) => {
  const p = s.split(' ').map(q => q.split(',').map(Number)).map(([b, v]) => [t.x(b), 440 + v / 2.529]);
  cov += `M${p[0][0]} 606`;
  for (let i = 1, x = p[0][0]; x < p[p.length - 1][0]; x += 3) {
    while (p[i][0] < x) i++;
    const f = (x - p[i - 1][0]) / (p[i][0] - p[i - 1][0]);
    const noise = Math.sin(x * 12.9) * 1.200;
    const y = 2 * Math.round((p[i - 1][1] + f * (p[i][1] - p[i - 1][1]) + noise) / 2);
    cov += `V${y}h3`;
  }
  cov += 'V606Z';
});
document.getElementById('coverage').setAttribute('d', cov);

/* Packed rows: joins between neighbouring reads.
   . notch   | hairline   # gap   ( read starts with an arrow   ) read ends with an arrow */
const packedWest = `378. 416. 487| 525. 562. 634| 674) 712) 785. 820| 857( 933# 1006. 1046( 1087| 1123. 1160. 1194. 1230. 1267| 1303. 1376| 1413. 1450. 1487|
422( 462| 536. 573. 611. 650. 716. 822| 859. 896. 930. 966. 1004| 1075. 1145. 1182. 1219. 1255. 1328. 1362. 1433. 1469. 1505)
430# 467. 504. 541. 578. 615| 654. 692| 730. 767| 804. 841. 914# 988. 1062. 1135) 1173. 1211| 1282) 1356( 1394| 1431. 1469.
397. 432| 469. 507. 544. 580. 618. 656( 731. 806) 810| 880( 915. 952| 990. 1062. 1097( 1138| 1175. 1214| 1250. 1283( 1397) 1433. 1470. 1509|
434. 471. 510. 580. 618| 658) 697. 735. 771) 811) 849. 922( 998. 1035. 1107. 1142) 1180. 1222( 1294. 1331( 1404. 1442. 1479|
408( 482| 554. 592( 631. 666( 740. 777. 850# 890) 929. 964. 1000. 1073. 1109. 1147. 1221-1227# 1297. 1369. 1407| 1479|
409# 447) 520. 556| 594) 632. 670( 712( 752# 791. 828) 903. 940. 974. 1011| 1048. 1088) 1125. 1161| 1200. 1237. 1310. 1347. 1383| 1456#
411. 449( 488. 526( 565. 602| 641) 678. 749# 859| 896) 933. 970. 1006( 1046( 1087# 1125) 1166. 1202. 1239| 1385) 1493(
411. 449( 490| 530. 567. 603# 641. 679| 720) 795. 830. 867. 904. 940. 975. 1014) 1050| 1088) 1125( 1165| 1205) 1278( 1352. 1424. 1457-1463#
416. 453. 490| 529. 567. 602-608) 643. 718-726) 797. 833| 870. 977| 1016) 1054( 1129( 1168| 1208. 1280. 1317. 1390. 1430( 1467-1474)
416. 453( 492. 530( 570. 606. 643# 681. 715-722( 833) 909) 980( 1056. 1129( 1170# 1208. 1245. 1281# 1392) 1430. 1470)
424| 460-468) 501. 538. 645( 722) 761| 834-840( 880# 915. 953. 989# 1027. 1064. 1138| 1176. 1214. 1252( 1289-1300# 1338) 1377. 1449| 1488)
400. 474) 513. 552) 620. 657) 697( 772. 813) 855-864) 973( 1015# 1054) 1134) 1177-1185# 1223( 1263. 1300) 1337. 1383-1403) 1442)
471-477) 515. 551| 624) 664-675) 714-728) 764) 806) 850-864# 930-938# 977) 1017. 1056. 1094. 1134) 1176-1184# 1224) 1263. 1302) 1341( 1382-1406# 1443. 1482.
440| 478. 515. 552. 592( 634| 676) 715-729( 765-776# 815-821) 859( 898. 935. 973-983# 1020. 1060) 1099. 1138. 1176-1184# 1226( 1267| 1341-1350) 1388-1411) 1449. 1488.`.split('\n');
const packedEast = `118# 163) 207. 286# 330. 410# 453. 532| 574. 655. 738. 779. 821| 864. 905. 945| 990( 1071. 1111| 1153. 1234. 1280) 1319. 1361. 1400| 1442. 1485|
53# 138| 180. 222. 260. 303. 381| 421. 461. 503( 586) 668| 747. 791| 833. 915. 998. 1041| 1126| 1206# 1289| 1412| 1454. 1499.
58. 140. 221| 264. 306. 384| 426. 465| 512) 556. 598. 682) 764| 807. 848. 889( 931. 972| 1018. 1060. 1135| 1177. 1218. 1260. 1301. 1342# 1384. 1425. 1467.
70. 111. 152. 235# 318| 399) 441. 482. 525. 565. 607| 689. 769# 851. 893. 975| 1096. 1180) 1302. 1344. 1427| 1511#
80. 120. 161( 206. 249( 372| 414. 460( 503# 544. 586. 628# 716| 759. 800. 882) 927) 1010# 1052. 1094( 1182( 1268. 1312. 1354( 1401( 1488|
80( 162( 211# 254. 337. 462( 547| 586. 630# 674. 719| 762) 807. 846( 890( 936( 981| 1023. 1105| 1187. 1228| 1311-1318# 1359. 1403( 1447#
80( 163( 212# 257) 298. 339| 381. 422. 464) 511( 553-560# 641. 683. 726. 767. 809. 852( 935( 1023| 1066. 1108. 1150. 1192| 1274| 1316. 1360) 1403) 1446( 1490.
78( 122. 163( 213# 256. 299. 341. 381. 422# 470) 515. 556( 601| 643. 685. 769# 812. 855( 938. 980. 1023( 1193# 1238. 1282( 1324. 1367| 1412( 1499#
43| 161-169# 212) 257| 299. 345. 386. 424( 468-479# 559) 602. 643-650) 731. 851-858# 900. 941. 984) 1029| 1072. 1114. 1196( 1240| 1288) 1332. 1373. 1412. 1451-1458#
83# 128. 170. 212-225# 265. 347. 429. 471-481# 523. 566. 610) 653. 695. 776-786# 828. 908) 952. 994. 1035. 1077. 1117| 1159) 1201) 1244. 1289. 1331. 1370. 1409-1416( 1460| 1503)
84-95# 137. 177( 221( 267# 312. 354. 478-488) 530. 571. 612. 655. 696) 738. 782( 825( 869. 910. 952. 996. 1039) 1080. 1162| 1203. 1245. 1289( 1331| 1374. 1416. 1462#
102# 186. 264-270( 312. 355. 436) 481( 529| 571. 654. 695( 739# 784-790) 870. 914# 957. 1000( 1044| 1127. 1168. 1210. 1292-1302( 1346| 1385. 1426| 1468. 1511#
55. 97. 182( 269) 312( 354. 437# 483) 529) 571. 613| 655. 697. 778-796# 836. 879. 921. 963. 1048. 1130) 1171. 1215) 1255. 1299-1306) 1511)
104) 146. 188. 228| 272. 317# 360. 444| 486. 531( 616| 659. 701. 743. 781-797( 844# 892) 939( 985( 1029-1036( 1086# 1169# 1214) 1302( 1347( 1430| 1509#
65) 146. 188. 233( 275| 316. 362) 405) 448) 533-540) 620# 664. 781-801# 846-858) 942| 986) 1029-1041( 1089# 1172) 1216. 1259. 1303# 1349. 1391. 1470. 1515)`.split('\n');

/* Sparse rows: single reads, start / strand / end */
const looseWest = `369-404 404-442 442-478 478-515 515-550 558-597 596-633 678>717 736-774 776>815 822<862 862-898 901-937 938>976 980<1018 1023>1059 1066-1103 1104-1139 1143>1181 1189>1226 1230-1267 1273-1309 1308-1345 1347<1385 1411-1449 1450-1483 1487<1525
369-417 416>455 456<494 498<538 538-574 582>620 622>661 678>717 732<771 781>820 822<862 864-898 898-936 938<973 986-1022 1022>1060 1068>1107 1107-1138 1146>1184 1188>1227 1230<1267 1271<1309 1311>1352 1357<1394 1411>1450 1450-1486 1491<1525
369-415 416<454 468-504 503-539 542>580 582>620 618<654 673<710 739>776 778-816 838<876 881-951 957>995 997>1033 1033-1103 1105-1141 1144-1177 1191>1229 1229<1268 1277<1315 1317>1357 1361>1397 1407<1443 1448<1486 1491-1525
369>423 425>462 468-506 506-544 544-581 581-614 622<662 679<718 735<773 778<813 843<884 884-920 923<961 961-1029 1034-1070 1070-1105 1107>1147 1147<1184 1191>1230 1236<1276 1276<1316 1317>1357 1357<1398 1409<1446 1449<1486 1491<1525
369-417 425>462 481-518 518-550 558>595 601>637 687<725 735<773 779<815 861<898 901>939 939<975 984<1022 1022>1062 1072<1109 1109<1148 1153-1190 1190-1223 1236<1276 1276<1313 1321>1360 1361<1397 1417>1455 1462<1525
369-420 425>465 486<526 534-571 571-607 607-643 687<728 738<778 784>823 864<902 902>939 939<975 984<1020 1022>1062 1072<1109 1109<1148 1153>1192 1193>1231 1236<1276 1282<1321 1322>1358 1363>1400 1417>1455 1479<1525
369-420 428>468 508-544 544>581 581<617 625<662 694>733 747-783 783>823 866<906 906<947 947-983 991>1030 1033>1072 1072<1109 1109<1148 1149<1188 1193>1230 1241>1280 1308>1346 1361<1401 1417>1455 1479<1525
369-420 422<462 505<545 555<595 614>653 694>733 760>797 797>837 866<906 911<950 957>996 1002-1037 1037-1075 1075-1109 1109<1148 1149<1188 1196>1235 1238<1278 1302<1342 1363<1401 1418>1458 1486-1525
369-387 386-423 428>468 508<547 555<595 609<646 694>733 768>807 882<922 922<962 967-1003 1003-1036 1079-1115 1115-1153 1153>1193 1209<1241 1246>1285 1302<1342 1363<1401 1414<1454 1496<1525
369-420 436<476 508<547 561<601 630>666 691<731 781<821 893-929 929-962 986<1026 1029<1066 1079-1115 1115-1153 1153-1188 1209<1241 1241<1281 1313>1352 1363<1401 1421>1458 1504-1525
369<407 410<449 518<558 566>603 699<739 789>827 888<929 929-962 999<1036 1079>1117 1117<1188 1209<1281 1313>1350 1368<1406 1421>1458 1504-1525
369<407 444>480 534>574 582<622 699<739 789>827 896-962 1002<1042 1079>1117 1117<1156 1158>1198 1209<1246 1260>1299 1316<1353 1421>1458 1503<1525
375>414 439<478 537>577 582<622 701<739 789>827 890<962 1007>1043 1076<1116 1158<1199 1212<1249 1317<1355 1421>1461 1503<1525
375>414 444>480 534<574 707>743 789>827 893<932 943>982 1010>1049 1108>1147 1317<1358 1418<1456 1504<1525
375<415 446>486 789>829 897<938 943>982 1005<1044 1323>1361 1418<1456 1509<1525
383<423 792>829 897<938 938<978 1012<1052 1326>1363 1424>1463 1509<1525
391>430 792>831 897<938 951>990 1018>1057 1329>1365
388<428 797>833 906>945 945<986 1018>1057 1323<1361
401>440 795<834 911<951 957>996 1021>1059 1323<1361
404>443 914<955 955<994 1029<1068 1326<1363`.split('\n');
const looseEast = `30-66 66-108 108-149 149-189 189-229 238-280 280-323 323-362 365>406 408<452 488>530 540-582 582-624 624-665 665-703 705>792 802>846 855<900 902-943 943>988 990<1034 1052-1096 1096-1138 1140<1182 1206-1246 1246-1285 1309>1354 1354-1396 1396-1438 1438-1478 1478-1517
48>88 92<136 136-175 190>233 236<280 280>363 365>406 408<452 483<525 535<579 582-624 624-660 663>708 711-753 753-793 805>848 857<902 905-943 943-984 990<1034 1050<1095 1101>1145 1145>1189 1218-1259 1259>1302 1321>1363 1363-1405 1424<1465 1472>1517
48>88 92<133 151-193 193-235 241-282 282>324 326>370 370<410 415<458 483<525 538-621 624<663 672-755 755-796 800<844 865>907 911>955 962>1006 1011<1055 1058-1100 1100-1140 1147<1191 1221-1300 1321>1365 1369>1413 1424<1468 1472-1517
43<87 94<139 149<193 194<235 239<323 329-371 371-410 425>469 483<528 543>626 639>683 691-732 732-770 770<850 863<908 914>957 957<1001 1014<1055 1061-1100 1100<1141 1152>1196 1221-1263 1263-1306 1320<1363 1363-1408 1424<1468 1479>1517
51>92 109>150 150<193 194<235 239<283 286>327 329>371 374>418 426<470 486<531 538<582 588<633 645<691 694-769 802<844 866<911 913<957 962>1006 1016<1058 1064>1145 1152>1192 1218<1264 1264-1306 1324-1366 1366-1405 1435-1479 1479-1517
51>95 109>151 151<196 199-242 242>284 287<331 331-371 374>418 426<470 492>534 538<585 594>637 654<697 699<739 748>792 811<856 868<911 920-960 960>1004 1050<1095 1097<1140 1152>1193 1222<1266 1269>1313 1324>1365 1373<1417 1429<1474 1479<1517
45<90 103<145 154<196 202-242 242-283 292>333 335>415 431>474 486<531 540<585 588<633 660>702 702>743 743<787 817>861 874-917 917<959 959<1004 1061>1151 1151<1191 1224<1266 1272>1317 1324>1368 1384>1425 1432<1475 1486-1517
51>95 107<151 154<196 205-246 246>290 290<374 377>420 429<473 495>539 549>592 597>637 663>708 712>756 772>815 815<859 877-920 920-963 963-1004 1070-1115 1115-1152 1158>1202 1224<1270 1272-1309 1328>1368 1384>1425 1432<1478 1484<1517
54<96 109<154 163<208 226>267 296-336 336>421 434>475 489<534 543<588 595<639 663>709 712>756 772-817 817-859 874<920 932>1016 1065<1110 1116>1159 1159>1205 1224<1271 1271-1309 1339<1385 1385-1426 1432<1478 1490-1517
60<106 112<154 169>213 226>267 299-342 342-383 386>430 434>475 492<537 561<606 612>656 678-720 720-760 766<811 820>861 874<920 926<971 974>1018 1065<1110 1116>1159 1159>1202 1233-1276 1276>1320 1339<1385 1385-1426 1432<1478 1486<1517
72>118 121>165 172>213 226>267 293<335 341<385 385-425 434>479 493<534 570>613 618>662 678>723 723>765 817<859 880>926 944>988 1070>1114 1120<1164 1167>1211 1236>1281 1387>1432 1438>1482 1484<1517
72<119 119-160 226>270 299>342 342<385 385-422 434<479 501>542 570<615 678-723 723>765 820<865 883>927 944>985 1070>1114 1125>1167 1167>1211 1231<1276 1381<1426 1432<1478 1486<1517
115<160 241<286 302>347 350-391 391-431 495<540 576>618 727>771 823<868 877<923 947>991 1070>1114 1125-1167 1165-1203 1230<1272 1384<1429 1438>1480 1487<1517
121>165 253>299 299<341 350-391 391-434 504>548 576>618 721<766 826<871 887>931 950>994 1070<1116 1122<1164 1170<1212 1242>1287 1384<1429 1441>1486 1486<1517
133>178 259-303 303-344 353-394 394>437 507>548 603<645 721<766 826<871 959<1001 1070<1116 1122<1164 1170<1212 1236<1282 1393<1438 1438-1481 1487<1517
133>178 302<347 348<389 392<434 501<546 727<769 829<874 959<1001 1076>1118 1122<1164 1242>1287 1399-1440 1440-1481 1490<1517
136>180 308>350 353>398 503<549 730<772 832<877 959<1001 1080>1125 1126<1170 1242>1287 1393<1438 1441>1486 1502-1517
130<175 329>372 375<419 510<552 730<772 959<1001 1095<1140 1161<1206 1245<1288 1441<1487 1502-1517
130<175 326<371 380>422 522>566 736>778 959<1001 1104>1148 1161<1206 1248<1294 1441<1484 1505-1517
332>374 383<428 516<561 733<778 959<1001 1104>1148 1248<1294 1447<1493`.split('\n');

const rowY = r => 628 + 28 * r;

function drawPacked(t, line, r) {
  const y = rowY(r), x0 = Math.max(278, t.x(t.from));
  add('reads', 'rect', { x: x0, y, width: t.x(t.to) - x0, height: 24, fill: '#c8c8c8' });
  let d = '';
  for (const [, a, b, kind] of line.matchAll(/(\d+)(?:-(\d+))?([.|#()])/g)) {
    const l = Math.round(t.x(+a)), w = b ? Math.round(t.x(+b)) - l : 0;
    if (kind === '.') d += `M${l - 1} ${y}h2v3l-1 2l-1 -2zM${l - 1} ${y + 24}h2v-3l-1 -2l-1 2z`;
    else if (kind === '|') d += `M${l - 1} ${y}h2v24h-2z`;
    else if (kind === '#') d += b ? `M${l} ${y}h${w}v24h${-w}z` : `M${l - 2} ${y}h4v24h-4z`;
    else if (kind === '(') d += `M${l - 1} ${y}h${w + 4}q-3 12 0 24h${-w - 4}z`;
    else d += `M${l - 3} ${y}h${w + 4}v24h${-w - 4}q4.500 -12 0 -24z`;
  }
  add('reads', 'path', { d, fill: '#fafafa' });
}
function drawLoose(t, line, r) {
  const y = rowY(r);
  let d = '';
  for (const [, a, dir, b] of line.matchAll(/(\d+)([<>-])(\d+)/g)) {
    const l = Math.round(t.x(+a)), e = Math.round(t.x(+b));
    if (dir === '<') d += `M${l + 4} ${y}H${e}v24H${l + 4}L${l} ${y + 12}z`;
    else if (dir === '>') d += `M${l} ${y}H${e - 4}L${e} ${y + 12}L${e - 4} ${y + 24}H${l}z`;
    else d += `M${l} ${y}H${e}v24H${l}z`;
  }
  add('reads', 'path', { d, fill: '#c8c8c8' });
}
packedWest.forEach((s, r) => drawPacked(west, s, r));
packedEast.forEach((s, r) => drawPacked(east, s, r));
looseWest.forEach((s, i) => drawLoose(west, s, i + 15));
looseEast.forEach((s, i) => drawLoose(east, s, i + 15));

/* Mismatched bases */
const base = { r: '#f00', g: '#0f0', b: '#00e', o: '#d17105' };
const mark = (t, list) => list.split(' ').forEach(m => {
  const [, r, b, c] = m.match(/(\d+):(\d+)(\w)/);
  add('reads', 'rect', { x: Math.round(t.x(+b)) - 1, y: rowY(+r) + 2, width: 2, height: 22, fill: base[c] });
});
mark(west, '1:1343g 3:889g 3:907g 9:586b 9:1061g 9:1356o 10:1463g 11:1107b 12:644o 12:836o 15:1250r 16:875o 16:966o 19:1372o 20:588r 24:402b 24:1338r 26:944b');
mark(east, '0:1017r 2:363b 3:673r 4:348r 5:43b 6:287g 9:369b 9:1313g 9:1436g 10:49r 12:559r 12:649b 12:996b 13:40b 13:399g 14:885r 14:1144o 16:634b 17:116o 18:1361b 19:1171b 20:245r 20:263r 22:1132r 25:309b 25:400r 25:402r 26:1469g 28:755r 30:324g 34:399b 34:1108o');
add('reads', 'rect', { x: 2409, y: 825, width: 26, height: 26, fill: '#fafafa', stroke: '#bbb', 'stroke-width': 2 });
add('reads', 'rect', { x: 2410, y: 826, width: 10, height: 22, fill: '#f00' });
add('reads', 'circle', { cx: 2741, cy: 1145, r: 3, fill: '#111' });
```
